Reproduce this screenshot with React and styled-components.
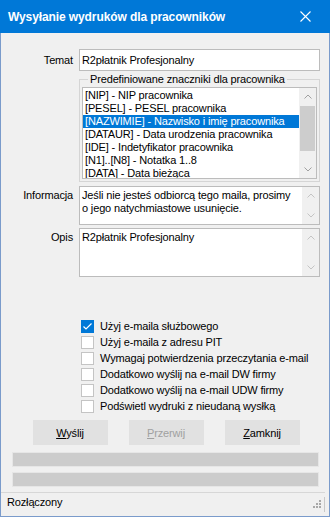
import React from "react";
import styled, { createGlobalStyle } from "styled-components";

const Global = createGlobalStyle`
  html, body { margin: 0; padding: 0; background: #ffffff; }
  body { font-family: "Liberation Sans", Arial, sans-serif; font-size: 11px; color: #000; }
  * { box-sizing: border-box; }
`;

const Window = styled.div`
  width: 330px;
  height: 517px;
  display: flex;
  flex-direction: column;
`;

const TitleBar = styled.div`
  height: 33px;
  flex: none;
  background: #0078d7;
  display: flex;
  align-items: center;
  justify-content: space-between;
  padding: 0 19px 0 8px;
`;

const Title = styled.div`
  color: #fff;
  font-weight: bold;
  font-size: 12px;
  letter-spacing: -0.1px;
  white-space: nowrap;
`;

const Frame = styled.div`
  flex: 1;
  display: flex;
  flex-direction: column;
  background: #f0f0f0;
  border: 1px solid #7a9bcb;
  border-top: none;
  min-height: 0;
`;

const Form = styled.div`
  display: flex;
  flex-direction: column;
  padding: 16px 8px 0 0;
  letter-spacing: -0.15px;
`;

const Row = styled.div`
  display: flex;
  align-items: ${(p) => (p.$top ? "flex-start" : "center")};
  gap: 6px;
  margin-top: ${(p) => p.$mt || 0}px;
`;

const Label = styled.div`
  width: 72px;
  flex: none;
  text-align: right;
  line-height: 13px;
  padding-top: ${(p) => p.$pt || 0}px;
  white-space: nowrap;
`;

const TextInput = styled.input`
  width: 241px;
  height: 22px;
  border: 1px solid #bcbcbc;
  background: #fff;
  padding: 0 2px;
  font: inherit;
  letter-spacing: inherit;
  color: #000;
  outline: none;
`;

const Group = styled.fieldset`
  width: 241px;
  margin: 1px 0 0 78px;
  padding: 1px 2px 2px;
  border: 1px solid #d5d5d5;
  min-width: 0;
`;

const Legend = styled.legend`
  padding: 0 2px;
  margin-left: 6px;
  line-height: 14px;
  font-size: 11px;
`;

const ListBox = styled.div`
  height: 92px;
  border: 1px solid #bcbcbc;
  background: #fff;
  display: flex;
  overflow: hidden;
`;

const ListItems = styled.div`
  flex: 1;
  padding-top: 1px;
  min-width: 0;
`;

const ListItem = styled.div`
  height: 13px;
  line-height: 13px;
  padding-left: 2px;
  white-space: nowrap;
  background: ${(p) => (p.$selected ? "#0078d7" : "transparent")};
  color: ${(p) => (p.$selected ? "#fff" : "#000")};
`;

const Memo = styled.div`
  width: 241px;
  height: ${(p) => p.$h}px;
  border: 1px solid #bcbcbc;
  background: #fff;
  display: flex;
`;

const MemoText = styled.div`
  flex: 1;
  padding: 2px 2px 0;
  line-height: 13px;
`;

const ScrollBar = styled.div`
  width: 17px;
  flex: none;
  background: #f0f0f0;
  display: flex;
  flex-direction: column;
`;

const ArrowBtn = styled.div`
  height: 17px;
  flex: none;
  display: flex;
  align-items: center;
  justify-content: center;
`;

const Track = styled.div`
  flex: 1;
  display: flex;
  flex-direction: column;
  align-items: center;
`;

const Thumb = styled.div`
  width: 15px;
  height: 45px;
  margin-top: 1px;
  background: #cdcdcd;
`;

const Checks = styled.div`
  margin: 41px 0 0 80px;
  display: flex;
  flex-direction: column;
  letter-spacing: -0.15px;
`;

const CheckRow = styled.label`
  height: 16px;
  display: flex;
  align-items: center;
  gap: 6px;
  white-space: nowrap;
`;

const Box = styled.span`
  width: 13px;
  height: 13px;
  flex: none;
  border: 1px solid ${(p) => (p.$checked ? "#0078d7" : "#c4c4c4")};
  background: ${(p) => (p.$checked ? "#0078d7" : "#fff")};
  display: flex;
  align-items: center;
  justify-content: center;
`;

const Buttons = styled.div`
  display: flex;
  justify-content: center;
  gap: 21px;
  margin: 6px 0 0 2px;
`;

const Button = styled.button`
  width: 75px;
  height: 25px;
  border: 1px solid #e1e1e1;
  background: #e1e1e1;
  font: inherit;
  font-size: 11px;
  letter-spacing: -0.15px;
  color: ${(p) => (p.disabled ? "#a0a0a0" : "#000")};
  padding: 0;
  u { text-decoration: underline; }
`;

const Progress = styled.div`
  margin: ${(p) => p.$mt}px 10px 0 11px;
  height: 15px;
  border: 1px solid #e6e6e6;
  background: #cccccc;
`;

const StatusBar = styled.div`
  flex: 1;
  margin-top: 5px;
  margin-right: 4px;
  border-top: 1px solid #d7d7d7;
  display: flex;
  align-items: flex-start;
  padding: 2px 0 0 6px;
`;

const StatusText = styled.div`
  flex: 1;
  line-height: 15px;
  letter-spacing: -0.15px;
`;

const Grip = styled.svg`
  margin-top: 5px;
  margin-right: 3px;
  flex: none;
`;

const PanelEdge = styled.div`
  width: 1px;
  height: 15px;
  margin-top: 2px;
  background: #c8c8c8;
`;

const Chevron = ({ up, color }) => (
  <svg width="8" height="5" viewBox="0 0 8 5">
    <path
      d={up ? "M0.5 4.5 L4 1 L7.5 4.5" : "M0.5 0.5 L4 4 L7.5 0.5"}
      fill="none"
      stroke={color}
      strokeWidth="1"
    />
  </svg>
);

const Scroll = ({ thumb, color }) => (
  <ScrollBar>
    <ArrowBtn>
      <Chevron up color={color} />
    </ArrowBtn>
    <Track>{thumb && <Thumb />}</Track>
    <ArrowBtn>
      <Chevron color={color} />
    </ArrowBtn>
  </ScrollBar>
);

const items = [
  "[NIP] - NIP pracownika",
  "[PESEL] - PESEL pracownika",
  "[NAZWIMIE] - Nazwisko i imię pracownika",
  "[DATAUR] - Data urodzenia pracownika",
  "[IDE] - Indetyfikator pracownika",
  "[N1]..[N8] - Notatka 1..8",
  "[DATA] - Data bieżąca",
];

const checks = [
  ["Użyj e-maila służbowego", true],
  ["Użyj e-maila z adresu PIT", false],
  ["Wymagaj potwierdzenia przeczytania e-mail", false],
  ["Dodatkowo wyślij na e-mail DW firmy", false],
  ["Dodatkowo wyślij na e-mail UDW firmy", false],
  ["Podświetl wydruki z nieudaną wysłką", false],
];

export default function App() {
  return (
    <>
      <Global />
      <Window>
        <TitleBar>
          <Title>Wysyłanie wydruków dla pracowników</Title>
          <svg width="11" height="11" viewBox="0 0 11 11">
            <path d="M0.5 0.5 L10.5 10.5 M10.5 0.5 L0.5 10.5" stroke="#fff" strokeWidth="1.1" />
          </svg>
        </TitleBar>
        <Frame>
          <Form>
            <Row>
              <Label>Temat</Label>
              <TextInput defaultValue="R2płatnik Profesjonalny" />
            </Row>
            <Group>
              <Legend>Predefiniowane znaczniki dla pracownika</Legend>
              <ListBox>
                <ListItems>
                  {items.map((t, i) => (
                    <ListItem key={t} $selected={i === 2}>
                      {t}
                    </ListItem>
                  ))}
                </ListItems>
                <Scroll thumb color="#a0a0a0" />
              </ListBox>
            </Group>
            <Row $top $mt={4}>
              <Label $pt={3}>Informacja</Label>
              <Memo $h={39}>
                <MemoText>
                  Jeśli nie jesteś odbiorcą tego maila, prosimy
                  <br />o jego natychmiastowe usunięcie.
                </MemoText>
                <Scroll color="#c4c4c4" />
              </Memo>
            </Row>
            <Row $top $mt={3}>
              <Label $pt={3}>Opis</Label>
              <Memo $h={49}>
                <MemoText>R2płatnik Profesjonalny</MemoText>
                <Scroll color="#c4c4c4" />
              </Memo>
            </Row>
          </Form>
          <Checks>
            {checks.map(([t, c]) => (
              <CheckRow key={t}>
                <Box $checked={c}>
                  {c && (
                    <svg width="11" height="11" viewBox="0 0 11 11">
                      <path d="M1.5 5.5 L4 8 L9.5 2.5" fill="none" stroke="#fff" strokeWidth="1.2" />
                    </svg>
                  )}
                </Box>
                {t}
              </CheckRow>
            ))}
          </Checks>
          <Buttons>
            <Button>
              <u>W</u>yślij
            </Button>
            <Button disabled>
              <u>P</u>rzerwij
            </Button>
            <Button>
              <u>Z</u>amknij
            </Button>
          </Buttons>
          <Progress $mt={7} />
          <Progress $mt={5} />
          <StatusBar>
            <StatusText>Rozłączony</StatusText>
            <Grip width="8" height="8" viewBox="0 0 8 8">
              <g fill="#a8a8a8">
                <rect x="6" y="0" width="2" height="2" />
                <rect x="3" y="3" width="2" height="2" />
                <rect x="6" y="3" width="2" height="2" />
                <rect x="0" y="6" width="2" height="2" />
                <rect x="3" y="6" width="2" height="2" />
                <rect x="6" y="6" width="2" height="2" />
              </g>
            </Grip>
            <PanelEdge />
          </StatusBar>
        </Frame>
      </Window>
    </>
  );
}
